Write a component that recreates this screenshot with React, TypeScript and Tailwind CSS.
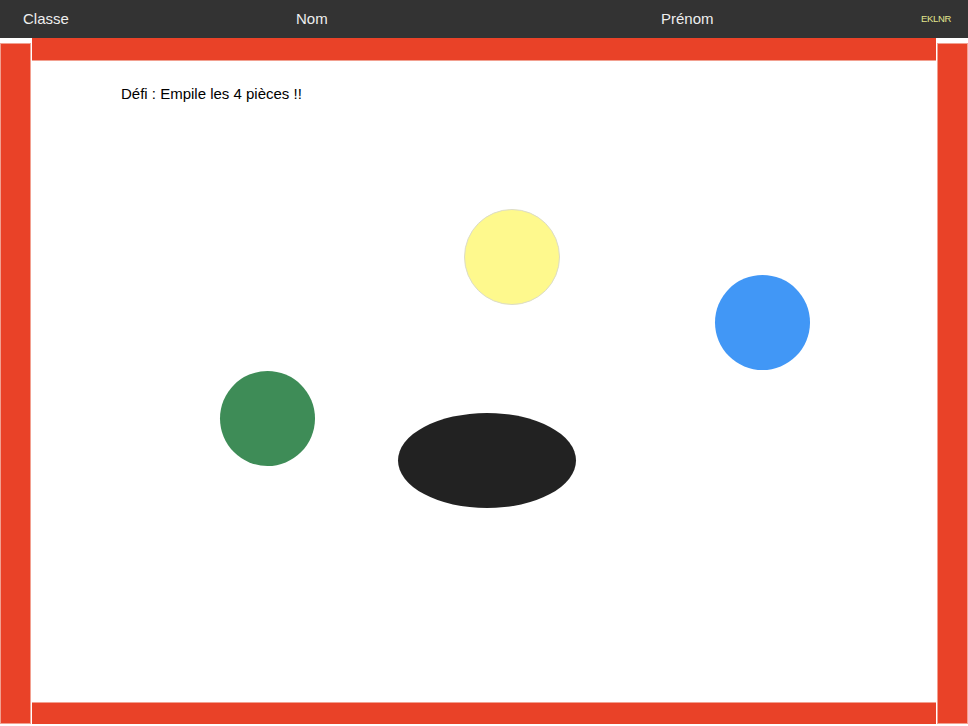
import React from "react";

export default function App() {
  const font = { fontFamily: '"Liberation Sans", Arial, sans-serif' };
  return (
    <div className="w-[968px] h-[726px] bg-white overflow-hidden flex flex-col" style={font}>
      <div className="h-[38px] bg-[#333333] flex items-center text-[15px] text-[#eeeeee] shrink-0">
        <div className="w-[296px] pl-[23px]">Classe</div>
        <div className="w-[365px]">Nom</div>
        <div className="w-[260px]">Prénom</div>
        <div className="text-[9.5px] text-[#e2e68e] tracking-[-0.3px]">EKLNR</div>
      </div>
      <div className="flex flex-1 h-[686px]">
        <div className="w-[31px] mt-[5px] mb-[2px] bg-[#e94228] border border-[#f2a090]" />
        <div className="w-[905px] ml-[1px] flex flex-col">
          <div className="h-[23px] bg-[#e94228] border-b border-[#f2a090]" />
          <div className="relative flex-1 bg-white">
            <div className="absolute left-[89px] top-[24px] text-[15px] leading-[17px] text-black">Défi : Empile les 4 pièces !!</div>
            <div className="absolute left-[432px] top-[148px] w-[96px] h-[96px] rounded-full bg-[#fef98d] border border-[#dcdcc8]" />
            <div className="absolute left-[683px] top-[214px] w-[95px] h-[95px] rounded-full bg-[#4197f6]" />
            <div className="absolute left-[188px] top-[310px] w-[95px] h-[95px] rounded-full bg-[#3e8c57]" />
            <div className="absolute left-[366px] top-[352px] w-[178px] h-[95px] rounded-[50%] bg-[#222222]" />
          </div>
          <div className="h-[22px] mb-[2px] bg-[#e94228] border-t border-[#f2a090]" />
        </div>
        <div className="w-[31px] ml-[1px] mt-[5px] mb-[2px] bg-[#e94228] border border-[#f2a090]" />
      </div>
    </div>
  );
}
